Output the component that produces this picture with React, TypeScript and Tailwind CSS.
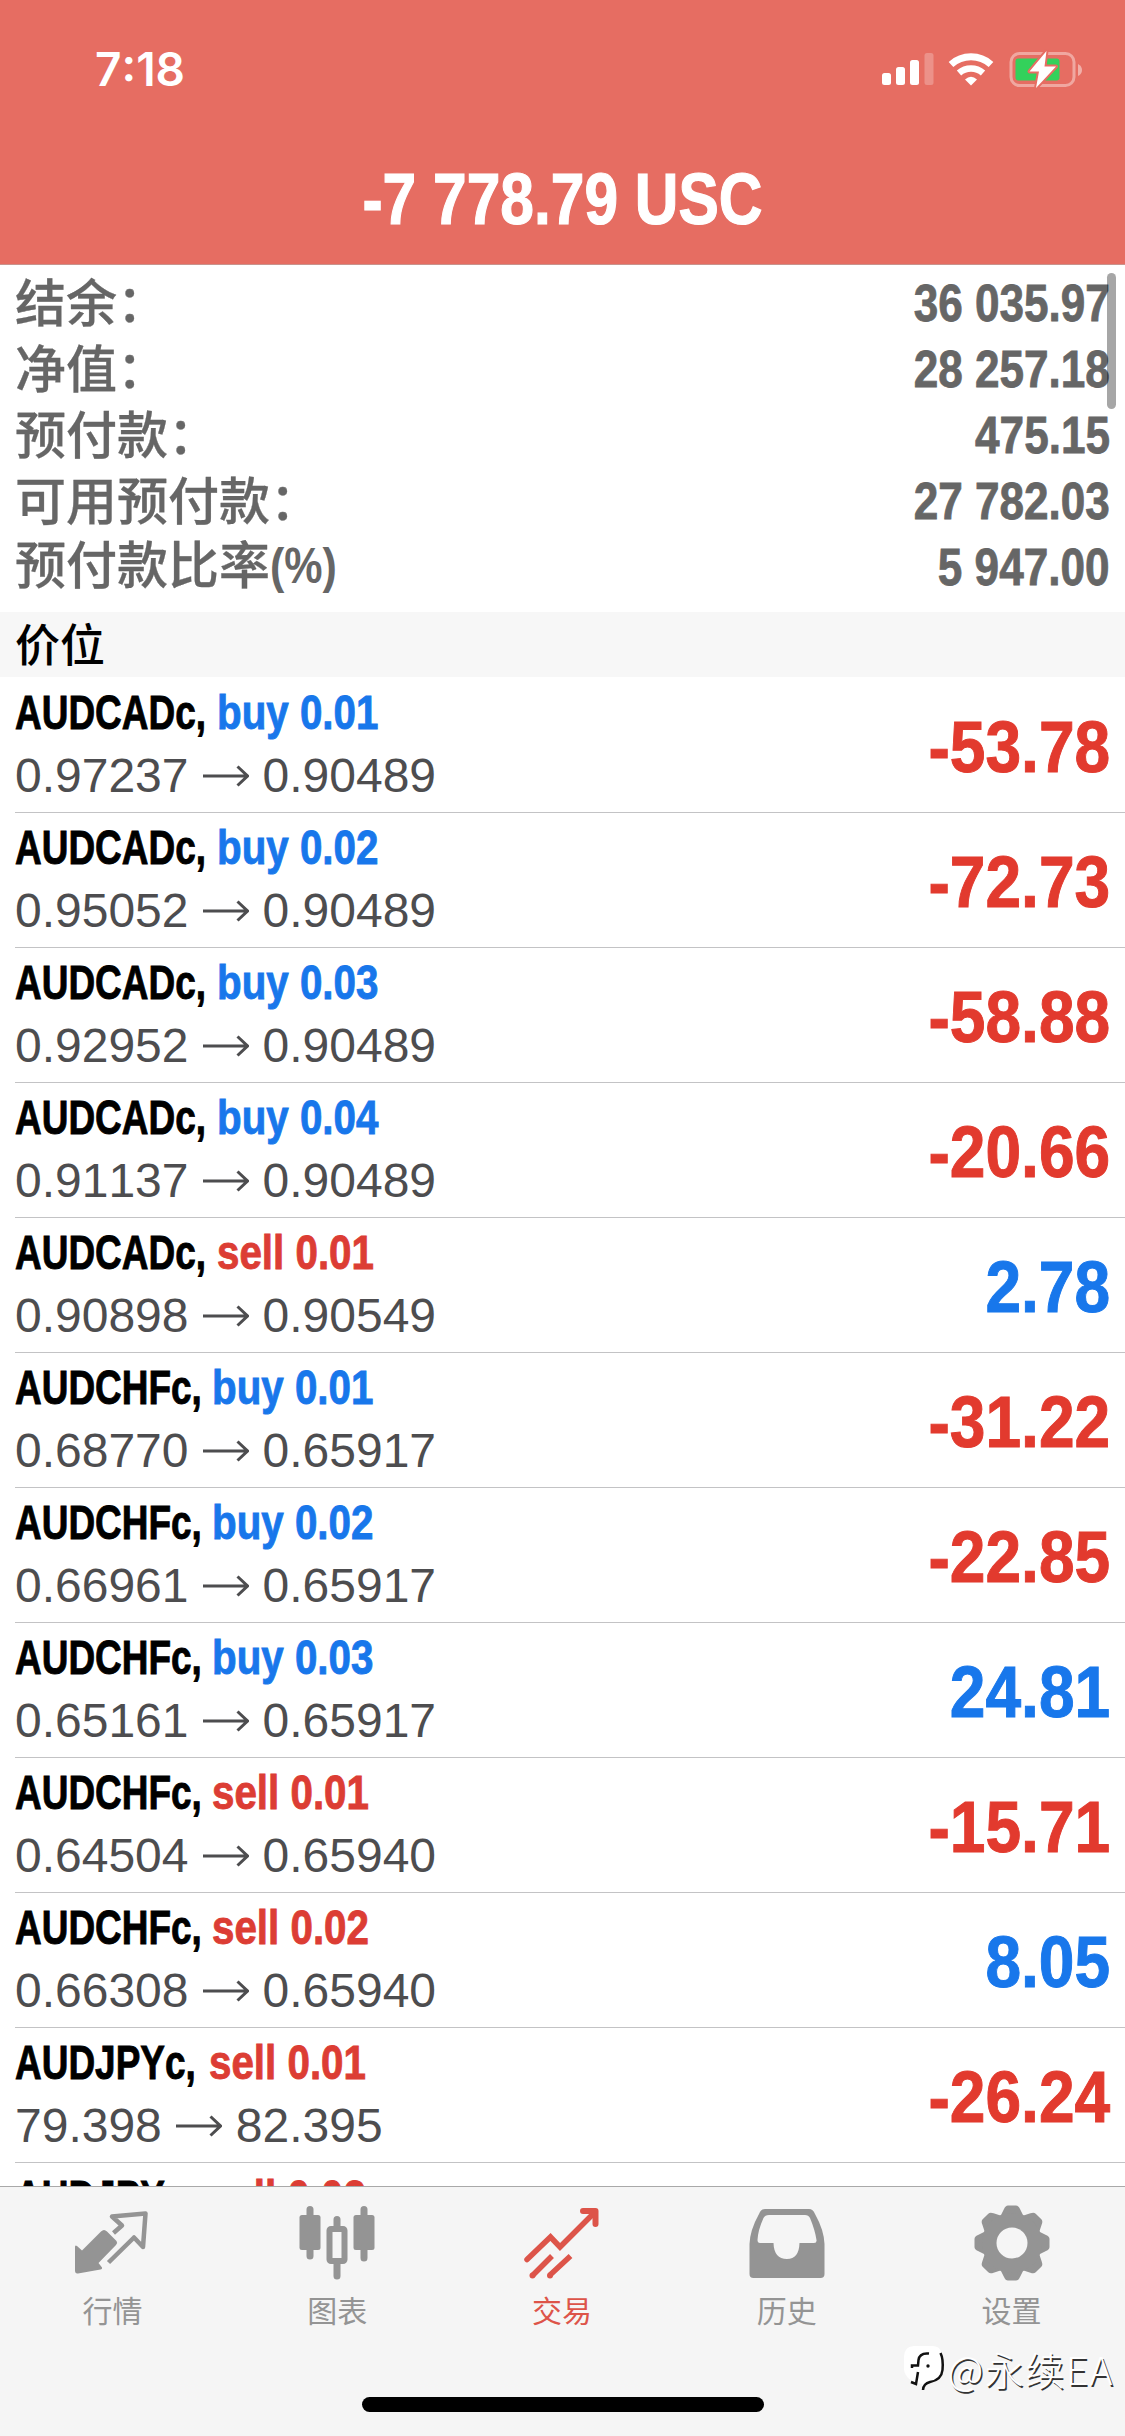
import React from 'react';

type Side = 'buy' | 'sell';

interface Position {
  symbol: string;
  side: Side;
  lots: string;
  open: string;
  current: string;
  profit: string;
}

const summary = [
  { label: '结余：', value: '36 035.97' },
  { label: '净值：', value: '28 257.18' },
  { label: '预付款：', value: '475.15' },
  { label: '可用预付款：', value: '27 782.03' },
  { label: '预付款比率', suffix: '(%)', value: '5 947.00' },
];

const positions: Position[] = [
  { symbol: 'AUDCADc', side: 'buy', lots: '0.01', open: '0.97237', current: '0.90489', profit: '-53.78' },
  { symbol: 'AUDCADc', side: 'buy', lots: '0.02', open: '0.95052', current: '0.90489', profit: '-72.73' },
  { symbol: 'AUDCADc', side: 'buy', lots: '0.03', open: '0.92952', current: '0.90489', profit: '-58.88' },
  { symbol: 'AUDCADc', side: 'buy', lots: '0.04', open: '0.91137', current: '0.90489', profit: '-20.66' },
  { symbol: 'AUDCADc', side: 'sell', lots: '0.01', open: '0.90898', current: '0.90549', profit: '2.78' },
  { symbol: 'AUDCHFc', side: 'buy', lots: '0.01', open: '0.68770', current: '0.65917', profit: '-31.22' },
  { symbol: 'AUDCHFc', side: 'buy', lots: '0.02', open: '0.66961', current: '0.65917', profit: '-22.85' },
  { symbol: 'AUDCHFc', side: 'buy', lots: '0.03', open: '0.65161', current: '0.65917', profit: '24.81' },
  { symbol: 'AUDCHFc', side: 'sell', lots: '0.01', open: '0.64504', current: '0.65940', profit: '-15.71' },
  { symbol: 'AUDCHFc', side: 'sell', lots: '0.02', open: '0.66308', current: '0.65940', profit: '8.05' },
  { symbol: 'AUDJPYc', side: 'sell', lots: '0.01', open: '79.398', current: '82.395', profit: '-26.24' },
  { symbol: 'AUDJPYc', side: 'sell', lots: '0.02', open: '79.902', current: '82.395', profit: '-91.47' },
];

// condensed symbol names keep their own column width
const symbolWidth: Record<string, string> = {
  AUDCADc: 'w-[202px]',
  AUDCHFc: 'w-[197px]',
  AUDJPYc: 'w-[194px]',
};

const QuotesIcon = () => (
  <svg width="76" height="76" viewBox="0 0 76 76" fill="none">
    <path
      d="M1 42Q1 39.500 3 41L8 45.500L27 26.500Q30 23.500 33 26.500L42.500 36Q44 38 42 40L24.500 58L28 62.500Q28.500 64.500 26.500 64.500L4 68.500Q1 69 1 65.500Z"
      fill="#949494"
    />
    <path d="M39.500 28L48 20.500L38 11.500L71.500 8.500L69 42L60 32.500L34.500 57.500" stroke="#949494" strokeWidth="4.500" strokeLinejoin="round" />
  </svg>
);

const ChartIcon = () => (
  <svg width="76" height="76" viewBox="0 0 76 76" fill="none" stroke="#949494">
    <path d="M11 4.500V51M65 4.500V53M38 14.500V21M38 59V71" strokeWidth="7" strokeLinecap="round" />
    <rect x="0.500" y="10" width="21" height="35" rx="2.500" fill="#949494" stroke="none" />
    <rect x="54.500" y="10" width="21" height="35" rx="2.500" fill="#949494" stroke="none" />
    <rect x="30.500" y="24" width="15" height="32" rx="1.500" strokeWidth="6" />
  </svg>
);

const TradeIcon = () => (
  <svg width="76" height="76" viewBox="0 0 76 76" fill="none" stroke="#dd5449" strokeWidth="5.500">
    <path d="M3 54.500L26.500 32L36 42L71 7" strokeLinecap="round" />
    <path d="M59 6H71.500V19" strokeWidth="6" strokeLinecap="round" strokeLinejoin="round" />
    <path d="M9 70L28 51M26 70L46.500 51" />
    <circle cx="8.500" cy="70.500" r="3" fill="#dd5449" stroke="none" />
    <circle cx="26" cy="70.500" r="3" fill="#dd5449" stroke="none" />
  </svg>
);

const HistoryIcon = () => (
  <svg width="76" height="76" viewBox="0 0 76 76">
    <path
      fill="#949494"
      fillRule="evenodd"
      d="M16 4H60Q64 4 66 9Q75 25 75.500 39V69Q75.500 73 71.500 73H4.500Q0.500 73 0.500 69V39Q1 25 10 9Q12 4 16 4ZM20 10Q16 10 14.500 13Q9 25 8.500 35Q8.500 38 11 38H24.500Q25 54 38 54Q50 54 50.500 38H65Q68 38 67.500 35Q66 25 61 13Q59.500 10 56 10Z"
    />
  </svg>
);

const SettingsIcon = () => (
  <svg width="76" height="76" viewBox="0 0 76 76">
    <g fill="#949494">
      {[0, 45, 90, 135, 180, 225, 270, 315].map((deg) => (
        <path key={deg} transform={`rotate(${deg} 38 38)`} d="M25 14L30 4Q31.500 0.500 34 0.500H42Q44.500 0.500 46 4L51 14Z" />
      ))}
      <circle cx="38" cy="38" r="30" />
    </g>
    <circle cx="38" cy="38" r="15.500" fill="#f5f5f5" />
  </svg>
);

const tabs = [
  { label: '行情', icon: QuotesIcon, active: false },
  { label: '图表', icon: ChartIcon, active: false },
  { label: '交易', icon: TradeIcon, active: true },
  { label: '历史', icon: HistoryIcon, active: false },
  { label: '设置', icon: SettingsIcon, active: false },
];

const StatusBar = () => (
  <div className="flex h-[132px] items-start justify-between pl-[95px] pr-[43px] pt-[46px]">
    <span className="font-['Inter'] text-[46px] font-semibold leading-[46px] text-white">7:18</span>
    <div className="flex h-[46px] items-center">
      <svg width="200" height="46" viewBox="0 0 200 46" fill="none">
        <g fill="#fff">
          <rect x="0" y="27" width="9" height="12" rx="2.500" />
          <rect x="14" y="21" width="9" height="18" rx="2.500" />
          <rect x="28" y="14" width="9" height="25" rx="2.500" />
          <rect x="42.500" y="7" width="9" height="32" rx="2.500" opacity="0.250" />
        </g>
        <path d="M69 18.500A30 30 0 0 1 109 18.500" stroke="#fff" strokeWidth="7" />
        <path d="M77 27A18 18 0 0 1 101 27" stroke="#fff" strokeWidth="6.500" />
        <path d="M83 33.500Q89 28 95 33.500L89 39.500Z" fill="#fff" />
        <rect x="129" y="7.500" width="63" height="32" rx="8.500" stroke="#fff" strokeOpacity="0.400" strokeWidth="3" />
        <path d="M196 18Q200 20 200 24Q200 28 196 30Z" fill="#fff" fillOpacity="0.450" />
        <rect x="133.500" y="12.500" width="44" height="22" rx="3" fill="#33d15b" />
        <path d="M164.500 5L147.500 25.500H157L154 42L174 20.500H162.500Z" fill="#fff" stroke="#e66d62" strokeWidth="4" paintOrder="stroke" strokeLinejoin="round" />
      </svg>
    </div>
  </div>
);

const PriceArrow = () => (
  <svg width="46" height="22" viewBox="0 0 46 22" fill="none" stroke="#4d4d4f" strokeWidth="3">
    <path d="M0 11H45M34.500 1.500L44.500 11L34.500 20.500" />
  </svg>
);

const PositionRow = ({ position }: { position: Position }) => (
  <div className="ml-[15px] flex h-[135px] shrink-0 items-center justify-between border-b border-[#c3c3c5] pr-[15px]">
    <div className="flex h-full flex-col pt-[5px]">
      <div className="flex h-[60px] whitespace-pre text-[48px] font-bold leading-[60px] [-webkit-text-stroke:0.9px_currentColor]">
        <div className={symbolWidth[position.symbol]}>
          <span className="inline-block origin-left scale-x-[0.77] text-black">{position.symbol},</span>
        </div>
        <span className={`inline-block origin-left scale-x-[0.84] ${position.side === 'buy' ? 'text-[#1877eb]' : 'text-[#dc3d34]'}`}>
          {position.side} {position.lots}
        </span>
      </div>
      <div className="mt-[3px] flex h-[60px] items-center gap-[14px] text-[48px] leading-[60px] text-[#4d4d4f]">
        <span>{position.open}</span>
        <PriceArrow />
        <span>{position.current}</span>
      </div>
    </div>
    <span
      className={`origin-right scale-x-[0.89] pt-[4px] text-[72px] font-bold leading-[80px] [-webkit-text-stroke:1px_currentColor] ${
        position.profit.startsWith('-') ? 'text-[#e23a2e]' : 'text-[#1877eb]'
      }`}
    >
      {position.profit}
    </span>
  </div>
);

const Watermark = () => (
  <div className="absolute bottom-[40px] right-[11px] flex items-center gap-[3px]">
    <svg width="42" height="46" viewBox="0 0 42 46">
      <path d="M11 1H29Q39 1 39 12V24Q39 36 24 38L20 45L19 39Q2 36 1 24V11Q2 1 11 1Z" fill="#fff" />
      <path d="M37.500 8Q40.500 14 39.500 25Q38.500 35 27 37Q20.500 38.500 20 45" stroke="#111" strokeWidth="2.500" fill="none" />
      <path d="M26 8.500Q16.500 7.500 15.500 15L15 20.500H9V23M15 27L13 39L8 37" stroke="#111" strokeWidth="2.500" fill="none" />
      <circle cx="25" cy="21" r="1.700" fill="#111" />
    </svg>
    <span className="font-['Noto_Sans_CJK_SC'] text-[39px] font-light leading-[56px] tracking-[1.5px] text-white [text-shadow:1.5px_1.5px_0_#333]">@永续EA</span>
  </div>
);

const App: React.FC = () => {
  return (
    <div className="relative flex h-[2436px] w-[1125px] flex-col overflow-hidden bg-white font-['Liberation_Sans','Noto_Sans_CJK_SC',sans-serif] [font-kerning:none]">
      <header className="h-[265px] shrink-0 border-b border-[#c9938d] bg-[#e66d62]">
        <StatusBar />
        <h1 className="scale-x-[0.84] text-center text-[72px] font-bold leading-[134px] text-white [-webkit-text-stroke:1.2px_#fff]">
          -7 778.79 USC
        </h1>
      </header>

      <section className="h-[347px] shrink-0 pl-[15px] pr-[15px] pt-[6px] text-[#666]">
        {summary.map((row) => (
          <div key={row.label} className="flex h-[66px] items-center justify-between">
            <div className="flex pb-[9px]">
              <span className="font-['Noto_Sans_CJK_SC'] text-[51px] font-medium leading-[66px] [-webkit-text-stroke:0.3px_#666]">{row.label}</span>
              {row.suffix && <span className="origin-left scale-x-[0.86] pt-[4px] text-[50px] font-bold leading-[66px]">{row.suffix}</span>}
            </div>
            <span className="origin-right scale-x-[0.865] text-[51px] font-bold leading-[66px] [-webkit-text-stroke:0.8px_#666]">{row.value}</span>
          </div>
        ))}
      </section>
      <div className="absolute right-[9px] top-[273px] h-[136px] w-[9px] rounded-full bg-black/35" />

      <div className="flex h-[65px] shrink-0 items-center bg-[#f7f7f7] pb-[3px] pl-[15px] font-['Noto_Sans_CJK_SC'] text-[45px] font-medium text-black">
        价位
      </div>

      <main className="flex min-h-0 flex-1 flex-col overflow-hidden pt-px">
        {positions.map((position, i) => (
          <PositionRow key={i} position={position} />
        ))}
      </main>

      <nav className="h-[250px] shrink-0 border-t border-[#a9a9a9] bg-[#f5f5f5]">
        <div className="grid w-[1124px] grid-cols-5">
          {tabs.map(({ label, icon: Icon, active }) => (
            <button key={label} className="flex flex-col items-center pt-[18px]">
              <Icon />
              <span className={`mt-[6px] font-['Noto_Sans_CJK_SC'] text-[30px] leading-[44px] ${active ? 'text-[#dd5449]' : 'text-[#949494]'}`}>{label}</span>
            </button>
          ))}
        </div>
        <div className="mx-auto mt-[66px] h-[15px] w-[402px] rounded-full bg-black" />
      </nav>
      <Watermark />
    </div>
  );
};

export default App;
